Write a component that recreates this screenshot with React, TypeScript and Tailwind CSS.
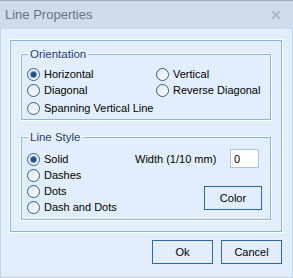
import React, { useState } from 'react';

function Radio({ label, checked=false, onClick=()=>{} }: any) {
  return (
    <div className="flex items-center h-[16px] cursor-default" onClick={onClick}>
      <span className="w-[13px] h-[13px] rounded-full border border-[#2f5f95] bg-gradient-to-br from-[#dfe7f1] to-white flex items-center justify-center shrink-0">
        {checked && <span className="w-[5px] h-[5px] rounded-full bg-[#1f4f8c] ring-1 ring-[#6d95c4]" />}
      </span>
      <span className="ml-[4px] whitespace-nowrap">{label}</span>
    </div>
  );
}

export default function App() {
  const [orient, setOrient] = useState('Horizontal');
  const [style, setStyle] = useState('Solid');
  const [width, setWidth] = useState('0');

  return (
    <div className="w-[293px] h-[278px] flex flex-col bg-[#e3eefc] text-[11px] text-black" style={{ fontFamily: '"Liberation Sans", Arial, sans-serif' }}>
      {/* title bar */}
      <div className="h-[29px] shrink-0 bg-[#cedbeb] border-t border-[#9aabc1] flex items-center justify-between pl-[5px] pr-[11px]">
        <span className="text-[13px] text-[#6b7383]">Line Properties</span>
        <span className="text-[14px] font-bold text-[#aab7c8] leading-none">✕</span>
      </div>

      <div className="flex-1 border-l border-r border-b border-[#c3d3e7] flex flex-col">
        {/* outer frame */}
        <div className="ml-[9px] mt-[11px] w-[272px] h-[192px] border border-[#8eb4e3] shadow-[0_0_0_1px_#ffffff] px-[10px] pt-[5px]">
          <fieldset className="h-[74px] border border-[#8eb4e3] shadow-[0_0_0_1px_#ffffff] pl-[5px] pt-[3px]">
            <legend className="ml-[1px] px-[2px] text-[11.5px] text-[#1f3a78]">Orientation</legend>
            <div className="grid grid-cols-[129px_1fr]">
              <Radio label="Horizontal" checked={orient==='Horizontal'} onClick={()=>setOrient('Horizontal')} />
              <Radio label="Vertical" checked={orient==='Vertical'} onClick={()=>setOrient('Vertical')} />
              <Radio label="Diagonal" checked={orient==='Diagonal'} onClick={()=>setOrient('Diagonal')} />
              <Radio label="Reverse Diagonal" checked={orient==='Reverse Diagonal'} onClick={()=>setOrient('Reverse Diagonal')} />
              <div className="col-span-2 mt-[2px]">
                <Radio label="Spanning Vertical Line" checked={orient==='Spanning'} onClick={()=>setOrient('Spanning')} />
              </div>
            </div>
          </fieldset>

          <fieldset className="mt-[9px] h-[91px] border border-[#8eb4e3] shadow-[0_0_0_1px_#ffffff] pl-[5px] pr-[8px] pt-[5px]">
            <legend className="ml-[1px] px-[2px] text-[11.5px] text-[#1f3a78]">Line Style</legend>
            <div className="flex">
              <div className="w-[108px] flex flex-col">
                <Radio label="Solid" checked={style==='Solid'} onClick={()=>setStyle('Solid')} />
                <Radio label="Dashes" checked={style==='Dashes'} onClick={()=>setStyle('Dashes')} />
                <Radio label="Dots" checked={style==='Dots'} onClick={()=>setStyle('Dots')} />
                <Radio label="Dash and Dots" checked={style==='DashDots'} onClick={()=>setStyle('DashDots')} />
              </div>
              <div className="flex-1 flex flex-col items-end">
                <div className="w-full flex items-center justify-between -mt-[2px]">
                  <span>Width (1/10 mm)</span>
                  <input value={width} onChange={e=>setWidth(e.target.value)} className="w-[29px] h-[19px] mr-[3px] border border-[#a9c4e6] bg-white px-[3px] text-[11px] outline-none" />
                </div>
                <button className="mt-[18px] w-[58px] h-[24px] border border-[#2e68a4] bg-[#e3eefc] text-[11px]">Color</button>
              </div>
            </div>
          </fieldset>
        </div>

        <div className="flex justify-end gap-[8px] mt-[8px] pr-[10px]">
          <button className="w-[61px] h-[24px] border border-[#2e68a4] bg-[#e3eefc] text-[11px]">Ok</button>
          <button className="w-[61px] h-[24px] border border-[#2e68a4] bg-[#e3eefc] text-[11px]">Cancel</button>
        </div>
      </div>
    </div>
  );
}
